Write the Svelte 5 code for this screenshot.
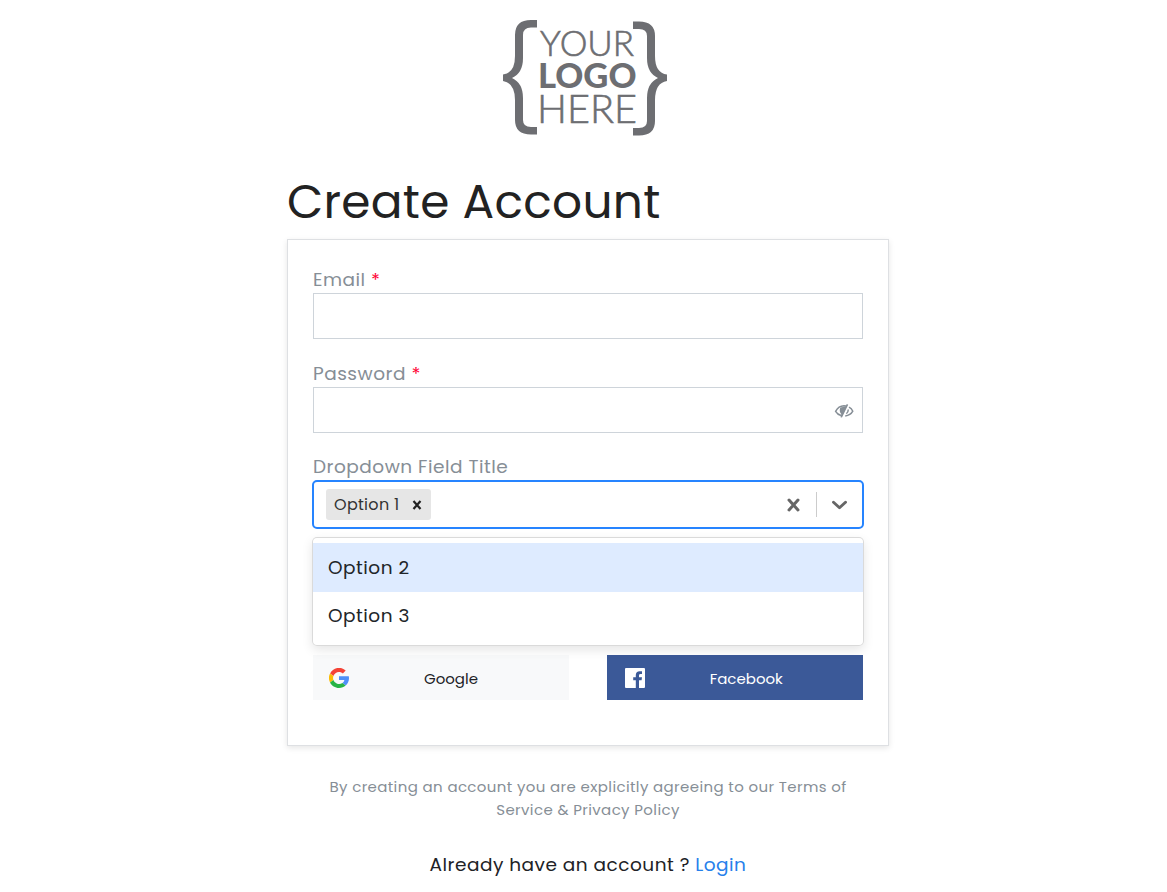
<script>
  const options = ['Option 2', 'Option 3'];
</script>

<main>
  <svg class="logo" viewBox="0 0 164 116" role="img" aria-label="Your logo here">
    <g fill="#6d6e72">
      <path d="M34 0H28Q12 0 12 15V36Q12 53 0 54.500V61Q12 63 12 80V100Q12 114.500 28 114.500H34V107H28Q20 107 20 100V78Q20 63 9 58Q20 53 20 38V15Q20 7.500 28 7.500H34Z" />
      <path d="M130 1.500H136Q152 1.500 152 16V36Q152 53 164 54.500V61Q152 63 152 80V101Q152 115.500 136 115.500H130V108H136Q144 108 144 101V78Q144 63 155 58Q144 53 144 38V16Q144 9 136 9H130Z" />
    </g>
    <g fill="#6d6e72">
      <text class="light" x="37" y="36" font-size="35" font-weight="300" textLength="94">YOUR</text>
      <text x="35" y="67.500" font-size="33.500" font-weight="900" textLength="98.500" lengthAdjust="spacingAndGlyphs">LOGO</text>
      <text class="light" x="34" y="103" font-size="39" font-weight="300" textLength="100" lengthAdjust="spacingAndGlyphs">HERE</text>
    </g>
  </svg>

  <h1>Create Account</h1>

  <form class="card">
    <label class="email">Email <b>*</b></label>
    <div class="input"></div>
    <label class="password">Password <b>*</b></label>
    <div class="input">
      <svg class="eye" viewBox="0 0 20 16" fill="none" stroke="#868e96" stroke-width="1.500">
        <path d="M7 12.500Q3.500 11.500 1.600 8.300Q4.500 3 10 2.800L12 2.900M15 4.200Q17.600 5.600 18.800 8.200Q16.500 12.400 11.200 13M14.300 6.600Q14.300 9.400 12.300 10.700" />
        <path d="M6.300 4.500Q4.800 8.500 7.300 11L6.500 14.200L8 14.500L14.200 1.800L12.800 1L11.500 3.600Z" fill="#868e96" stroke="none" />
      </svg>
    </div>
    <label class="dropdown">Dropdown Field Title</label>
    <div class="select">
      <div class="tag"><span>Option 1</span>
        <svg width="10" height="10" viewBox="0 0 10 10"><path d="M1.500 1L8.500 9M8.500 1L1.500 9" stroke="#222" stroke-width="2.200" /></svg>
      </div>
      <svg class="clear" width="14" height="14" viewBox="0 0 14 14"><path d="M3 2L12 12M12 2L3 12" stroke="#666" stroke-width="3" stroke-linecap="round" /></svg>
      <i></i>
      <svg class="chevron" width="16" height="10" viewBox="0 0 16 10"><path d="M2.500 2.300L8.500 7.800L14.500 2.300" fill="none" stroke="#666" stroke-width="2.900" stroke-linecap="round" stroke-linejoin="round" /></svg>
      <div class="menu">
        {#each options as option, index}
          <div class="option" class:focused={index === 0}>{option}</div>
        {/each}
      </div>
    </div>
    <div class="social">
      <div class="button google">
        <svg width="20" height="20" viewBox="0 0 48 48">
          <path fill="#f44336" d="M24 9.500c3.500 0 6.700 1.200 9.200 3.600l6.900-6.900A23.500 23.500 0 0 0 2.600 13.200l8 6.200C12.500 13.700 17.700 9.500 24 9.500z" />
          <path fill="#4f8ff7" d="M48 24.500c0-1.600-.2-3.600-.5-5H24v9.500h13a11 11 0 0 1-4.800 7.200l7.700 6C44.400 38 48 31.800 48 24.500z" />
          <path fill="#fbbc05" d="M10.500 28.600a14.500 14.500 0 0 1 0-9.200l-8-6.200a24 24 0 0 0 0 21.600z" />
          <path fill="#28b446" d="M24 48c6.500 0 11.900-2.100 15.900-5.800l-7.700-6A14.500 14.500 0 0 1 10.500 28.600l-8 6.200C6.500 42.600 14.600 48 24 48z" />
        </svg>
        <span>Google</span>
      </div>
      <div class="button facebook">
        <svg width="20" height="20" viewBox="0 0 20 20">
          <path fill="#fff" d="M1 0H19Q20 0 20 1V19Q20 20 19 20H14V12.300H16.600L17 9.300H14V7.400Q14 6 15.500 6H17V3.200H14.800Q10.800 3.200 10.800 7V9.300H8.200V12.300H10.800V20H1Q0 20 0 19V1Q0 0 1 0Z" />
        </svg>
        <span>Facebook</span>
      </div>
    </div>
  </form>

  <p class="terms">By creating an account you are explicitly agreeing to our Terms of<br />Service &amp; Privacy Policy</p>
  <p class="login"><span>Already have an account ?</span> <a>Login</a></p>
</main>

<style>
  :global(body) { margin: 0; background: #fff; }
  * { box-sizing: border-box; }
  main {
    width: 602px; height: 892px; margin-left: 287px; padding-top: 20px;
    display: flex; flex-direction: column;
    font-family: Poppins, Inter, sans-serif;
    color: #212226; white-space: nowrap;
  }
  .logo { width: 164px; height: 116px; margin-left: 216px; flex: none; font-family: Lato, sans-serif; }
  .light { stroke: #6d6e72; stroke-width: .6px; }
  h1 { margin: 36px 0 0; height: 67px; font-size: 47px; line-height: 60px; font-weight: 400; letter-spacing: .28px; color: #222; }
  .card {
    height: 507px; padding: 26px 25px 0; border: 1px solid #dee0e3;
    box-shadow: 0 2px 6px rgba(0, 0, 0, .1); display: flex; flex-direction: column; flex: none;
  }
  label { display: block; height: 27px; line-height: 27px; font-size: 18.5px; color: #868e96; letter-spacing: .5px; flex: none; }
  label b { color: #ff0033; font-weight: 400; }
  .input { height: 46px; border: 1px solid #ced4da; margin-bottom: 21px; padding-right: 8px; display: flex; align-items: center; justify-content: flex-end; flex: none; }
  .eye { width: 20px; height: 16px; margin-top: 2px; }
  .dropdown { height: 26px; line-height: 25px; }
  .select {
    position: relative; height: 49px; margin: 0 -1px; padding: 0 15px 0 12px; border: 2px solid #2684ff; border-radius: 5px;
    display: flex; align-items: center; flex: none;
  }
  .tag { width: 105px; height: 31px; padding: 0 9px 0 8px; border-radius: 3px; background: #e6e6e6; display: flex; align-items: center; justify-content: space-between; font-size: 16px; letter-spacing: .3px; color: #333; }
  .clear { margin-left: auto; }
  .select i { width: 1px; height: 25px; background: #ccc; margin: 0 14px 0 16px; }
  .menu {
    position: absolute; left: -2px; right: -2px; top: 55px; height: 109px; padding: 6px 1px; background: #fff;
    border-radius: 5px; box-shadow: inset 0 0 0 1px #dadada, 0 4px 11px rgba(0, 0, 0, .1); z-index: 1;
  }
  .option { height: 48px; line-height: 48px; padding-left: 15px; font-size: 18.5px; letter-spacing: .5px; color: #212529; }
  .focused { background: #deebff; height: 49px; line-height: 49px; }
  .social { display: flex; justify-content: space-between; margin-top: 126px; }
  .button { width: 256px; height: 45px; padding-left: 16px; display: flex; align-items: center; font-size: 15px; background: #f8f9fa; }
  .button span { flex: 1; text-align: center; padding-top: 2px; padding-right: 16px; }
  .facebook { background: #3b5998; color: #fff; padding-left: 17.5px; }
  .facebook span { padding-right: 15px; }
  .terms { margin: 29px 0 0; text-align: center; color: #868e96; font-size: 15px; letter-spacing: .37px; line-height: 23px; }
  .login { margin: 29px 0 0; text-align: center; font-size: 18.5px; letter-spacing: .49px; line-height: 30px; }
  .login a { color: #2680eb; }
</style>
